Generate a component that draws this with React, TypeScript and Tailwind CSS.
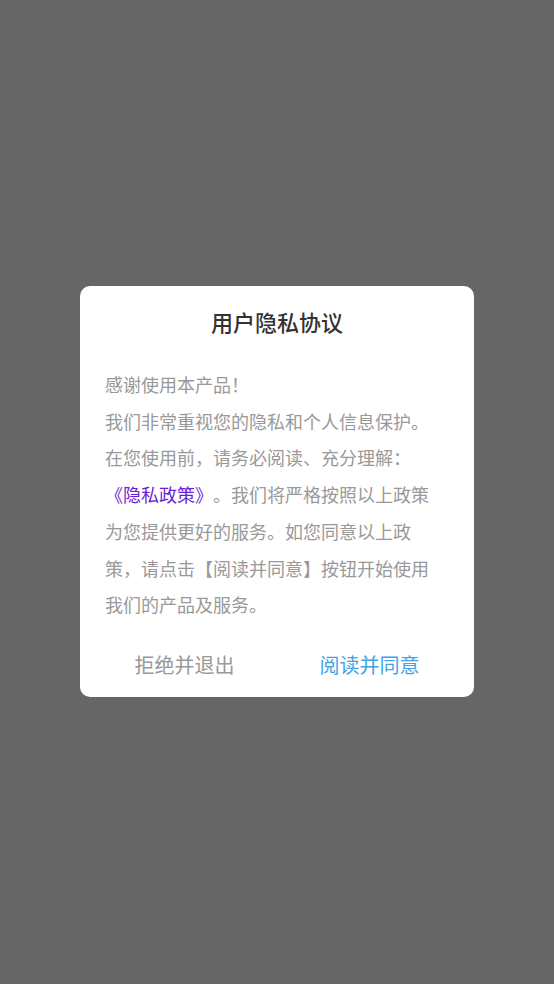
import React from 'react';

const FONT = "font-['Noto_Sans_CJK_SC','Noto_Sans',sans-serif]";

export default function App() {
  return (
    <div className={`min-h-screen w-full bg-[#666666] flex items-center justify-center ${FONT} [text-spacing-trim:space-all]`}>
      <div className="w-[394px] bg-white rounded-[10px] flex flex-col mt-[-1px]">
        {/* 标题 */}
        <h1 className="pt-[20px] text-center text-[22px] leading-[30px] font-medium text-[#333333]">
          用户隐私协议
        </h1>

        {/* 正文 */}
        <div className="mt-[30px] pl-[25px] pr-[40px] text-[18px] leading-[36.8px] text-[#999999]">
          <p>感谢使用本产品！</p>
          <p>
            我们非常重视您的隐私和个人信息保护。在您使用前，请务必阅读、充分理解：
            <span className="text-[#6a1fd6]">《隐私政策》</span>
            。我们将严格按照以上政策为您提供更好的服务。如您同意以上政策，请点击【阅读并同意】按钮开始使用我们的产品及服务。
          </p>
        </div>

        {/* 按钮 */}
        <div className="flex px-[12px] pb-[6px] mt-[16px]">
          <button className="flex-1 h-[52px] text-[20px] text-[#999999]">拒绝并退出</button>
          <button className="flex-1 h-[52px] text-[20px] text-[#3fa3e6]">阅读并同意</button>
        </div>
      </div>
    </div>
  );
}
